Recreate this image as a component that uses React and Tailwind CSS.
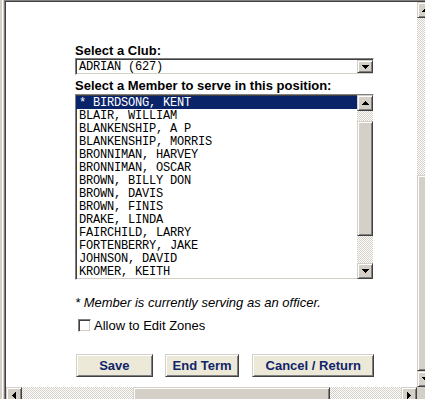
import React from "react";

const members = [
  "* BIRDSONG, KENT",
  "BLAIR, WILLIAM",
  "BLANKENSHIP, A P",
  "BLANKENSHIP, MORRIS",
  "BRONNIMAN, HARVEY",
  "BRONNIMAN, OSCAR",
  "BROWN, BILLY DON",
  "BROWN, DAVIS",
  "BROWN, FINIS",
  "DRAKE, LINDA",
  "FAIRCHILD, LARRY",
  "FORTENBERRY, JAKE",
  "JOHNSON, DAVID",
  "KROMER, KEITH",
];

const checker =
  "bg-[image:repeating-conic-gradient(#d4d0c8_0_25%,#ffffff_0_50%)] bg-[length:2px_2px]";

// little pixel arrow, drawn row by row like the old windows glyph
const Arrow = ({ dir }) => {
  const rows = [
    [3, 1],
    [2, 3],
    [1, 5],
    [0, 7],
  ];
  const vertical = dir === "up" || dir === "down";
  return (
    <svg
      width={vertical ? 7 : 4}
      height={vertical ? 4 : 7}
      shapeRendering="crispEdges"
    >
      {rows.map(([o, len], i) => {
        const step = dir === "up" || dir === "left" ? i : 3 - i;
        return vertical ? (
          <rect key={i} x={o} y={step} width={len} height={1} fill="#000" />
        ) : (
          <rect key={i} x={step} y={o} width={1} height={len} fill="#000" />
        );
      })}
    </svg>
  );
};

const raised =
  "bg-[#d4d0c8] border border-t-[#d4d0c8] border-l-[#d4d0c8] border-r-[#404040] border-b-[#404040] shadow-[inset_1px_1px_#ffffff,inset_-1px_-1px_#808080]";

const sunken =
  "border border-t-[#808080] border-l-[#808080] border-r-white border-b-white shadow-[inset_1px_1px_#404040,inset_-1px_-1px_#d4d0c8]";

const mono = "font-['Liberation_Mono',monospace] text-[12px] tracking-[-0.2px]";

const ScrollBtn = ({ dir, className = "" }) => (
  <div
    className={`w-[16px] h-[16px] shrink-0 flex items-center justify-center ${raised} ${className}`}
  >
    <Arrow dir={dir} />
  </div>
);

const FormButton = ({ children, width }) => (
  <button
    className={`h-[23px] ${width} bg-[#ece9d8] border border-t-[#d4d0c8] border-l-[#d4d0c8] border-r-[#404040] border-b-[#404040] shadow-[inset_1px_1px_#ffffff,inset_-1px_-1px_#808080] text-[13px] font-bold text-[#10246a] leading-none`}
  >
    {children}
  </button>
);

export default function App() {
  return (
    <div className="w-[425px] h-[399px] flex bg-[#d4d0c8] overflow-hidden font-['Liberation_Sans',Arial,sans-serif]">
      {/* window frame */}
      <div className="w-[2px] shrink-0 bg-[#d4d0c8]"></div>
      <div className="w-[1px] shrink-0 bg-white"></div>
      <div className="w-[1px] shrink-0 bg-[#d4d0c8]"></div>

      <div className="flex-1 flex flex-col border-l border-t border-[#808080] min-w-0">
        <div className="flex-1 flex flex-col border-l border-t border-[#404040] min-h-0">
          <div className="flex-1 flex min-h-0">
            {/* page content */}
            <div className="flex-1 bg-white pl-[69px] pt-[41px] text-black">
              <div className="w-[299px]">
                <div className="text-[13px] leading-[15px] font-bold">Select a Club:</div>

                <div className={`h-[17px] flex bg-white ${sunken}`}>
                  <div className={`flex-1 pl-[3px] leading-[16px] whitespace-pre ${mono}`}>
                    ADRIAN (627)
                  </div>
                  <div
                    className={`w-[16px] h-[13px] mt-[1px] flex items-center justify-center ${raised}`}
                  >
                    <Arrow dir="down" />
                  </div>
                </div>

                <div className="mt-[3px] text-[13px] leading-[15px] font-bold">
                  Select a Member to serve in this position:
                </div>

                <div className={`mt-[1px] h-[186px] flex bg-white ${sunken}`}>
                  <div className={`flex-1 overflow-hidden pt-[1px] ${mono}`}>
                    {members.map((m, i) => (
                      <div
                        key={m}
                        className={`h-[13px] leading-[14px] pl-[3px] whitespace-pre ${
                          i === 0 ? "bg-[#0a246a] text-white" : "text-black"
                        }`}
                      >
                        {m}
                      </div>
                    ))}
                  </div>
                  <div className="w-[16px] flex flex-col">
                    <ScrollBtn dir="up" />
                    <div className={`h-[10px] ${checker}`}></div>
                    <div className={`h-[115px] ${raised}`}></div>
                    <div className={`flex-1 ${checker}`}></div>
                    <ScrollBtn dir="down" />
                  </div>
                </div>

                <div className="mt-[15px] text-[13px] leading-[15px] italic">
                  * Member is currently serving as an officer.
                </div>

                <label className="mt-[8px] flex items-center h-[15px] text-[13px]">
                  <span className={`ml-[3px] w-[13px] h-[13px] bg-white ${sunken}`}></span>
                  <span className="ml-[3px]">Allow to Edit Zones</span>
                </label>

                <div className="mt-[21px] ml-[1px] flex gap-[12px]">
                  <FormButton width="w-[77px]">Save</FormButton>
                  <FormButton width="w-[75px]">End Term</FormButton>
                  <FormButton width="w-[122px] ml-[1px]">Cancel / Return</FormButton>
                </div>
              </div>
            </div>

            {/* page vertical scrollbar, cut by the window edge */}
            <div className="w-[8px] shrink-0 overflow-hidden">
              <div className="w-[16px] h-full flex flex-col">
                <ScrollBtn dir="up" />
                <div className={`h-[157px] ${checker}`}></div>
                <div className={`flex-1 ${raised}`}></div>
                <ScrollBtn dir="down" />
              </div>
            </div>
          </div>

          {/* page horizontal scrollbar */}
          <div className="h-[12px] shrink-0 flex overflow-hidden">
            <div className="flex-1 flex h-[16px]">
              <ScrollBtn dir="left" />
              <div className={`w-[111px] ${checker}`}></div>
              <div className={`w-[197px] h-[16px] ${raised}`}></div>
              <div className={`flex-1 ${checker}`}></div>
              <ScrollBtn dir="right" />
            </div>
            <div className="w-[8px] bg-[#d4d0c8]"></div>
          </div>
        </div>
      </div>
    </div>
  );
}
